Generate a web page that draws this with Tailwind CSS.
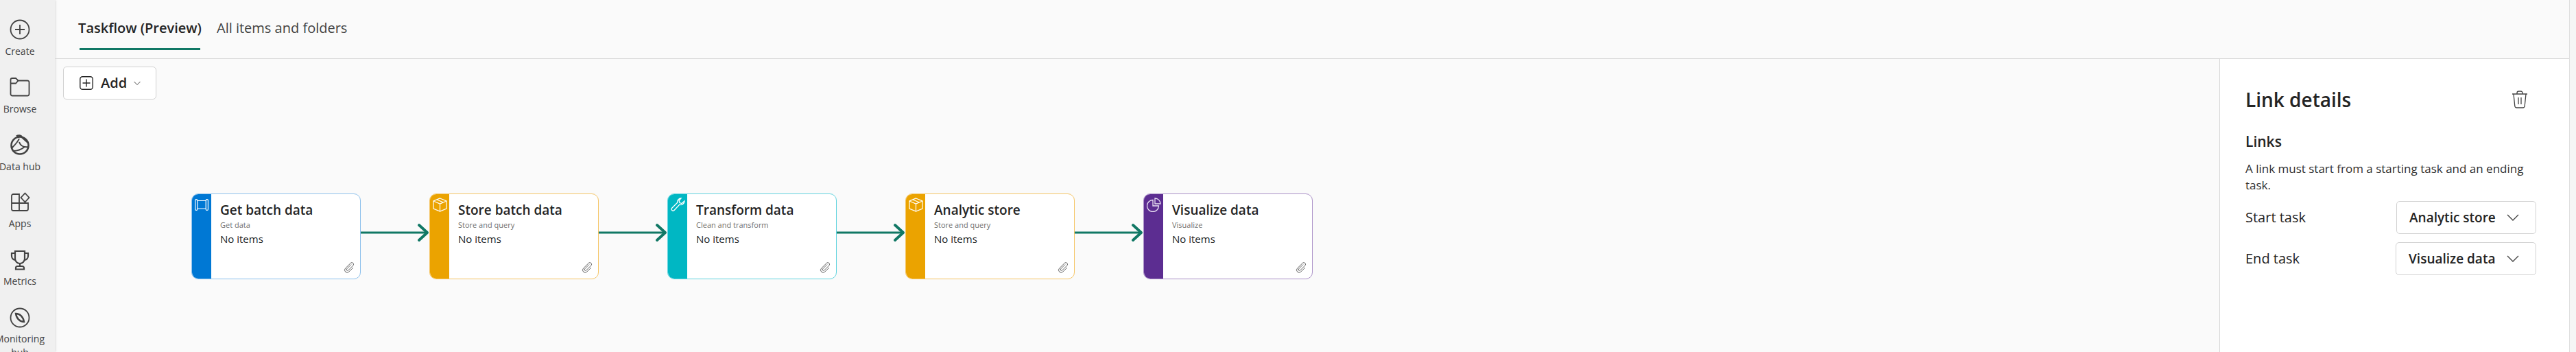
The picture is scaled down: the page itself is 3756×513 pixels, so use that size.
<!DOCTYPE html>
<html lang="en">
<head>
  <meta charset="UTF-8">
  <title>Taskflow</title>
  <script src="https://cdn.jsdelivr.net/npm/@tailwindcss/browser@4"></script>
</head>
<body class="h-[513px] w-[3756px] overflow-hidden bg-[#fafafa] font-['Open_Sans',sans-serif] text-[#242424]">
<div class="flex h-[513px]">

  <!-- left rail -->
  <nav class="flex h-[513px] w-[80px] shrink-0 flex-col items-center overflow-hidden bg-[#f0f0f0] pr-[22px] pt-[28px] text-[14px] leading-[16px] text-[#424242] shadow-[1px_0_3px_rgba(0,0,0,0.12)]">
    <div class="flex h-[84px] shrink-0 flex-col items-center">
      <svg class="h-[30px] w-[30px] shrink-0" viewBox="0 0 30 30" fill="none" stroke="#424242" stroke-width="1.8"><circle cx="15" cy="15" r="13.5"/><path d="M15 8v14M8 15h14"/></svg>
      <span class="mt-[9px]">Create</span>
    </div>
    <div class="flex h-[84px] shrink-0 flex-col items-center">
      <svg class="h-[30px] w-[30px] shrink-0" viewBox="0 0 30 30" fill="none" stroke="#424242" stroke-width="1.8"><path d="M1.500 4.500A2.500 2.500 0 0 1 4 2h5l3.500 3.500H26A2.500 2.500 0 0 1 28.500 8v17a2.500 2.500 0 0 1-2.500 2.500H4A2.500 2.500 0 0 1 1.500 25z"/><path d="M1.500 9.500H9l3.500-4"/></svg>
      <span class="mt-[9px]">Browse</span>
    </div>
    <div class="flex h-[84px] shrink-0 flex-col items-center">
      <svg class="h-[30px] w-[30px] shrink-0" viewBox="0 0 30 30" fill="none" stroke="#424242" stroke-width="2.6"><circle cx="15" cy="16" r="12.500"/><path d="M10 2.500c3-2 7-1 8.500 2L27 12"/><path d="M3 20c6-6 9-9 11-14M14 11c2 6 6 8 14 7M5 24c6 0 12-2 17-6" stroke-width="2"/></svg>
      <span class="mt-[9px] whitespace-nowrap">Data hub</span>
    </div>
    <div class="flex h-[84px] shrink-0 flex-col items-center">
      <svg class="h-[30px] w-[30px] shrink-0" viewBox="0 0 30 30" fill="none" stroke="#424242" stroke-width="1.8"><path d="M3 5.500A2.500 2.500 0 0 1 5.500 3H14v24H5.500A2.500 2.500 0 0 1 3 24.500zM3 16h24v8.500a2.500 2.500 0 0 1-2.500 2.500H14"/><path d="M22.500 1.500l6 6.500-6 6.500-6-6.500z"/></svg>
      <span class="mt-[8px]">Apps</span>
    </div>
    <div class="flex h-[84px] shrink-0 flex-col items-center">
      <svg class="h-[30px] w-[30px] shrink-0" viewBox="0 0 30 30" fill="none" stroke="#424242" stroke-width="2.2"><path d="M8 2h14v11a7 7 0 0 1-14 0z"/><path d="M8 5H3v4a6 6 0 0 0 5 6M22 5h5v4a6 6 0 0 1-5 6M15 20v4"/><path d="M9 28.500v-2a2.500 2.500 0 0 1 2.500-2.500h7a2.500 2.500 0 0 1 2.500 2.500v2z"/></svg>
      <span class="mt-[8px]">Metrics</span>
    </div>
    <div class="flex shrink-0 flex-col items-center">
      <svg class="h-[30px] w-[30px] shrink-0" viewBox="0 0 30 30" fill="none" stroke="#424242" stroke-width="1.8"><circle cx="15" cy="15" r="13.500"/><path d="M9 9c6 0 11 5 12 12-6 0-11-5-12-12z" stroke-width="2.400"/></svg>
      <span class="mt-[8px] whitespace-nowrap">Monitoring</span>
      <span class="mt-[4px]">hub</span>
    </div>
  </nav>

  <div class="flex min-w-0 flex-1 flex-col">
    <!-- tabs -->
    <div class="flex h-[86px] shrink-0 gap-[24px] border-b border-[#d6d6d6] pl-[36px]">
      <div class="flex h-[73px] w-[176px] items-end justify-center whitespace-nowrap border-b-[3px] border-[#117865] pb-[16px] text-[20px] leading-[26px] font-semibold">Taskflow (Preview)</div>
      <div class="flex h-[73px] items-end whitespace-nowrap pb-[19px] text-[20px] leading-[26px] text-[#424242]">All items and folders</div>
    </div>

    <div class="flex min-h-0 flex-1">
      <!-- canvas -->
      <div class="min-w-0 flex-1 pl-[12px] pt-[11px]">
        <button class="flex h-[48px] w-[136px] items-center rounded-[5px] border border-[#d1d1d1] bg-white pl-[23px] text-[20px] font-semibold">
          <svg class="h-[20px] w-[20px]" viewBox="0 0 20 20" fill="none" stroke="#242424" stroke-width="1.4"><rect x="0.800" y="0.800" width="18.400" height="18.400" rx="3.500"/><path d="M10 4.500v11M4.500 10h11"/></svg>
          <span class="ml-[11px]">Add</span>
          <svg class="ml-[10px] h-[10px] w-[10px]" viewBox="0 0 10 10" fill="none" stroke="#424242"><path d="M.5 3l4.500 4.500L9.500 3"/></svg>
        </button>

        <!-- taskflow diagram -->
        <div class="ml-[187px] mt-[137px] flex items-start">
          <div class="flex h-[125px] w-[247px] shrink-0 overflow-hidden rounded-[10px] border border-[#8cc0ec] bg-white">
            <div class="h-full w-[28px] shrink-0 bg-[#0078d4] pl-[4px] pt-[7px]">
              <svg class="block h-[17px] w-[20px]" viewBox="0 0 20 17" fill="none" stroke="#fff" stroke-width="1.200"><rect x="0.600" y="0.600" width="3.200" height="15.800" rx="1.500"/><rect x="16.200" y="0.600" width="3.200" height="15.800" rx="1.500"/><path d="M3.800 2.500h12.400M3.800 14h12.400"/></svg>
            </div>
            <div class="relative min-w-0 flex-1 pl-[13px] pt-[11px]">
              <div class="text-[19px] leading-[24px] font-semibold">Get batch data</div>
              <div class="mt-[2px] text-[11px] leading-[16px] text-[#707070]">Get data</div>
              <div class="mt-[2px] text-[15px] leading-[20px]">No items</div>
              <svg class="absolute bottom-[8px] right-[8px] h-[16px] w-[16px]" viewBox="0 0 16 16" fill="none" stroke="#616161"><path d="M11 3.500L4.500 10a1.500 1.500 0 0 0 2.100 2.100L14 4.700a2.500 2.500 0 0 0-3.500-3.500L2.600 9a3.600 3.600 0 0 0 5.100 5.100L14 8"/></svg>
            </div>
          </div>
          <div class="mt-[43px] w-[100px] shrink-0">
            <svg class="block h-[28px] w-[100px]" viewBox="0 0 100 28" fill="none" stroke="#117865"><path d="M0 14h98" stroke-width="3"/><path d="M85 3l12 11-12 11" stroke-width="4" stroke-linecap="round" stroke-linejoin="round"/></svg>
          </div>
          <div class="flex h-[125px] w-[247px] shrink-0 overflow-hidden rounded-[10px] border border-[#f5c463] bg-white">
            <div class="h-full w-[28px] shrink-0 bg-[#eba300] pl-[4px] pt-[5px]">
              <svg class="block h-[21px] w-[21px]" viewBox="0 0 21 21" fill="none" stroke="#fff" stroke-width="1.200"><path d="M10.500 1L20 5v11l-9.500 4L1 16V5zM1 5l9.500 4L20 5M10.500 9v11M6 3l9.500 4"/></svg>
            </div>
            <div class="relative min-w-0 flex-1 pl-[13px] pt-[11px]">
              <div class="text-[19px] leading-[24px] font-semibold">Store batch data</div>
              <div class="mt-[2px] text-[11px] leading-[16px] text-[#707070]">Store and query</div>
              <div class="mt-[2px] text-[15px] leading-[20px]">No items</div>
              <svg class="absolute bottom-[8px] right-[8px] h-[16px] w-[16px]" viewBox="0 0 16 16" fill="none" stroke="#616161"><path d="M11 3.500L4.500 10a1.500 1.500 0 0 0 2.100 2.100L14 4.700a2.500 2.500 0 0 0-3.500-3.500L2.600 9a3.600 3.600 0 0 0 5.100 5.100L14 8"/></svg>
            </div>
          </div>
          <div class="mt-[43px] w-[100px] shrink-0">
            <svg class="block h-[28px] w-[100px]" viewBox="0 0 100 28" fill="none" stroke="#117865"><path d="M0 14h98" stroke-width="3"/><path d="M85 3l12 11-12 11" stroke-width="4" stroke-linecap="round" stroke-linejoin="round"/></svg>
          </div>
          <div class="flex h-[125px] w-[247px] shrink-0 overflow-hidden rounded-[10px] border border-[#5fd3de] bg-white">
            <div class="h-full w-[28px] shrink-0 bg-[#00b7c3] pl-[4px] pt-[5px]">
              <svg class="block h-[21px] w-[21px]" viewBox="0 0 21 21" fill="none" stroke="#fff" stroke-width="1.300"><path d="M20 5a5.500 5.500 0 0 1-7.300 5.200L5 18.500a2.300 2.300 0 0 1-3.300-3.200l8-8A5.500 5.500 0 0 1 15 1l-3 3.500 1 3 3 1z"/></svg>
            </div>
            <div class="relative min-w-0 flex-1 pl-[13px] pt-[11px]">
              <div class="text-[19px] leading-[24px] font-semibold">Transform data</div>
              <div class="mt-[2px] text-[11px] leading-[16px] text-[#707070]">Clean and transform</div>
              <div class="mt-[2px] text-[15px] leading-[20px]">No items</div>
              <svg class="absolute bottom-[8px] right-[8px] h-[16px] w-[16px]" viewBox="0 0 16 16" fill="none" stroke="#616161"><path d="M11 3.500L4.500 10a1.500 1.500 0 0 0 2.100 2.100L14 4.700a2.500 2.500 0 0 0-3.500-3.500L2.600 9a3.600 3.600 0 0 0 5.100 5.100L14 8"/></svg>
            </div>
          </div>
          <div class="mt-[43px] w-[100px] shrink-0">
            <svg class="block h-[28px] w-[100px]" viewBox="0 0 100 28" fill="none" stroke="#117865"><path d="M0 14h98" stroke-width="3"/><path d="M85 3l12 11-12 11" stroke-width="4" stroke-linecap="round" stroke-linejoin="round"/></svg>
          </div>
          <div class="flex h-[125px] w-[247px] shrink-0 overflow-hidden rounded-[10px] border border-[#f5c463] bg-white">
            <div class="h-full w-[28px] shrink-0 bg-[#eba300] pl-[4px] pt-[5px]">
              <svg class="block h-[21px] w-[21px]" viewBox="0 0 21 21" fill="none" stroke="#fff" stroke-width="1.200"><path d="M10.500 1L20 5v11l-9.500 4L1 16V5zM1 5l9.500 4L20 5M10.500 9v11M6 3l9.500 4"/></svg>
            </div>
            <div class="relative min-w-0 flex-1 pl-[13px] pt-[11px]">
              <div class="text-[19px] leading-[24px] font-semibold">Analytic store</div>
              <div class="mt-[2px] text-[11px] leading-[16px] text-[#707070]">Store and query</div>
              <div class="mt-[2px] text-[15px] leading-[20px]">No items</div>
              <svg class="absolute bottom-[8px] right-[8px] h-[16px] w-[16px]" viewBox="0 0 16 16" fill="none" stroke="#616161"><path d="M11 3.500L4.500 10a1.500 1.500 0 0 0 2.100 2.100L14 4.700a2.500 2.500 0 0 0-3.500-3.500L2.600 9a3.600 3.600 0 0 0 5.100 5.100L14 8"/></svg>
            </div>
          </div>
          <div class="mt-[43px] w-[100px] shrink-0">
            <svg class="block h-[28px] w-[100px]" viewBox="0 0 100 28" fill="none" stroke="#117865"><path d="M0 14h98" stroke-width="3"/><path d="M85 3l12 11-12 11" stroke-width="4" stroke-linecap="round" stroke-linejoin="round"/></svg>
          </div>
          <div class="flex h-[125px] w-[247px] shrink-0 overflow-hidden rounded-[10px] border border-[#a98ec6] bg-white">
            <div class="h-full w-[28px] shrink-0 bg-[#5c2d91] pl-[4px] pt-[5px]">
              <svg class="block h-[21px] w-[21px]" viewBox="0 0 21 21" fill="none" stroke="#e8dff2" stroke-width="1.300"><path d="M9 3.500a8.500 8.500 0 1 0 8.500 8.500H9z"/><path d="M12 1a8 8 0 0 1 8 8h-8z"/></svg>
            </div>
            <div class="relative min-w-0 flex-1 pl-[13px] pt-[11px]">
              <div class="text-[19px] leading-[24px] font-semibold">Visualize data</div>
              <div class="mt-[2px] text-[11px] leading-[16px] text-[#707070]">Visualize</div>
              <div class="mt-[2px] text-[15px] leading-[20px]">No items</div>
              <svg class="absolute bottom-[8px] right-[8px] h-[16px] w-[16px]" viewBox="0 0 16 16" fill="none" stroke="#616161"><path d="M11 3.500L4.500 10a1.500 1.500 0 0 0 2.100 2.100L14 4.700a2.500 2.500 0 0 0-3.500-3.500L2.600 9a3.600 3.600 0 0 0 5.100 5.100L14 8"/></svg>
            </div>
          </div>
        </div>
      </div>

      <!-- link details panel -->
      <aside class="h-full w-[510px] shrink-0 border-l border-[#d6d6d6] bg-white pl-[37px] pr-[48px] pt-[39px]">
        <div class="flex items-center justify-between pr-[12px]">
          <h2 class="text-[28px] leading-[40px] font-semibold">Link details</h2>
          <svg class="h-[26px] w-[24px]" viewBox="0 0 24 26" fill="none" stroke="#424242" stroke-width="1.300"><path d="M1 5h22M8 5V3.500A2.500 2.500 0 0 1 10.500 1h3A2.500 2.500 0 0 1 16 3.500V5M3 5l1.800 17.500A2.800 2.800 0 0 0 7.600 25h8.800a2.800 2.800 0 0 0 2.800-2.500L21 5M10 10v10M14 10v10"/></svg>
        </div>
        <h3 class="mt-[29px] text-[21px] leading-[24px] font-semibold">Links</h3>
        <p class="mt-[16px] text-[17px] leading-[24px] text-[#323130]">A link must start from a starting task and an ending task.</p>
        <div class="mt-[11px] flex h-[48px] items-center justify-between">
          <span class="text-[20px]">Start task</span>
          <div class="flex h-[48px] w-[204px] items-center justify-between rounded-[5px] border border-[#d1d1d1] pl-[18px] pr-[24px] text-[19px] font-semibold">Analytic store
            <svg class="h-[12px] w-[18px]" viewBox="0 0 18 12" fill="none" stroke="#424242" stroke-width="1.300"><path d="M1 2l8 8 8-8"/></svg>
          </div>
        </div>
        <div class="mt-[12px] flex h-[48px] items-center justify-between">
          <span class="text-[20px]">End task</span>
          <div class="flex h-[48px] w-[205px] items-center justify-between rounded-[5px] border border-[#d1d1d1] pl-[18px] pr-[24px] text-[19px] font-semibold">Visualize data
            <svg class="h-[12px] w-[18px]" viewBox="0 0 18 12" fill="none" stroke="#424242" stroke-width="1.300"><path d="M1 2l8 8 8-8"/></svg>
          </div>
        </div>
      </aside>
    </div>
  </div>

  <!-- strip at the right edge -->
  <div class="h-[513px] w-[10px] shrink-0 border-l border-[#e0e0e0] bg-[#f5f5f5]"></div>
</div>
</body>
</html>
